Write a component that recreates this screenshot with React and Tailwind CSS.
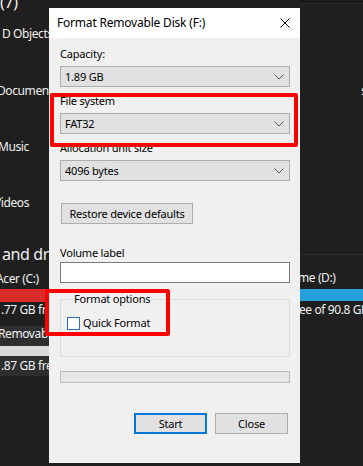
import React from "react";

const font = { fontFamily: '"Noto Sans", "Open Sans", sans-serif' };

function Chevron() {
  return (
    <svg width="10" height="6" viewBox="0 0 10 6" className="mr-[5px]">
      <path d="M0.5 0.5 L5 5 L9.5 0.5" fill="none" stroke="#555" strokeWidth="1" />
    </svg>
  );
}

function Combo({ value }) {
  return (
    <div className="h-[21px] border border-[#adadad] bg-[#e1e1e1] flex items-center justify-between pl-[4px]">
      <span className="text-[11px] leading-[16px] text-black">{value}</span>
      <Chevron />
    </div>
  );
}

function Label({ children, className = "" }) {
  return <div className={"text-[11px] leading-[16px] h-[16px] text-black whitespace-nowrap " + className}>{children}</div>;
}

export default function App() {
  return (
    <div className="relative w-[363px] h-[466px] overflow-hidden bg-[#1f1f1f] text-[#f0f0f0]" style={font}>
      <div className="flex h-full">
        {/* Left explorer column */}
        <div className="w-[49px] shrink-0 overflow-hidden whitespace-nowrap tracking-[-0.4px]">
          <div className="mt-[-8px] h-[20px] text-[16px] leading-[20px]">(7)</div>
          <div className="mt-[14px] h-[16px] text-[12px] leading-[16px] ml-[2px]">D Objects</div>
          <div className="mt-[41px] h-[16px] text-[12px] leading-[16px] ml-[-3px]">Documents</div>
          <div className="mt-[40px] h-[16px] text-[12px] leading-[16px] ml-[-2px]">Music</div>
          <div className="mt-[40px] h-[16px] text-[12px] leading-[16px] ml-[-6px]">Videos</div>
          <div className="mt-[33px] h-[20px] text-[16px] leading-[20px] ml-[2px]">and drives</div>
          <div className="mt-[7px] h-[16px] text-[12px] leading-[16px] ml-[-4px]">Acer (C:)</div>
          <div className="mt-[2px] h-[13px] bg-[#da2a2a]" />
          <div className="h-[16px] text-[12px] leading-[16px] ml-[1px]">.77 GB free</div>
          <div className="mt-[8px] bg-[#2e2e2e] pb-[2px]">
            <div className="h-[16px] text-[12px] leading-[16px] ml-[-2px]">Removable</div>
            <div className="mt-[4px] h-[10px] bg-[#d9d9d9]" />
            <div className="mt-[2px] h-[16px] text-[12px] leading-[16px] ml-[1px]">.87 GB free</div>
          </div>
        </div>

        {/* Dialog column */}
        <div className="w-[251px] shrink-0 pt-[8px] tracking-[-0.2px]">
          <div className="h-[455px] flex flex-col">
            <div className="h-[30px] bg-white flex items-center justify-between pl-[8px] pr-[10px]">
              <span className="text-[12px] leading-[16px] text-black">Format Removable Disk (F:)</span>
              <svg width="10" height="10" viewBox="0 0 10 10">
                <path d="M0.5 0.5 L9.5 9.5 M9.5 0.5 L0.5 9.5" stroke="#000" strokeWidth="1" />
              </svg>
            </div>
            <div className="flex-1 bg-[#f0f0f0] pl-[11px] pr-[10px] pt-[8px] flex flex-col">
              <Label>Capacity:</Label>
              <div className="mt-[4px]"><Combo value="1.89 GB" /></div>
              <Label className="mt-[6px]">File system</Label>
              <div className="mt-[4px]"><Combo value="FAT32" /></div>
              <Label className="mt-[6px]">Allocation unit size</Label>
              <div className="mt-[4px]"><Combo value="4096 bytes" /></div>
              <button className="mt-[22px] ml-[1px] w-[132px] h-[21px] border border-[#adadad] bg-[#e1e1e1] text-[11px] leading-[16px] text-black">
                Restore device defaults
              </button>
              <Label className="mt-[21px]">Volume label</Label>
              <div className="mt-[1px] h-[21px] border border-[#7a7a7a] bg-white" />
              <fieldset className="mt-[8px] h-[66px] border border-[#dcdcdc] pl-[6px]">
                <legend className="ml-[6px] px-[1px] text-[11px] leading-[16px] text-black">Format options</legend>
                <div className="mt-[8px] flex items-center">
                  <div className="w-[13px] h-[13px] border border-[#2d6fbd] bg-white" />
                  <span className="ml-[3px] text-[11px] leading-[16px] text-black">Quick Format</span>
                </div>
              </fieldset>
              <div className="mt-[14px] h-[12px] border border-[#bcbcbc] bg-[#e6e6e6]" />
              <div className="mt-[30px] flex justify-end gap-[8px] pr-[2px]">
                <button className="w-[73px] h-[21px] border-2 border-[#0078d7] bg-[#e1e1e1] text-[11px] leading-[16px] text-black">
                  Start
                </button>
                <button className="w-[73px] h-[21px] border border-[#adadad] bg-[#e1e1e1] text-[11px] leading-[16px] text-black">
                  Close
                </button>
              </div>
            </div>
          </div>
        </div>

        {/* Right explorer column */}
        <div className="flex-1 overflow-hidden whitespace-nowrap tracking-[-0.4px]">
          <div className="h-[4px] bg-[#191919] border-b border-[#2a2a2a]" />
          <div className="mt-[79px] h-[16px] text-[12px] leading-[16px] ml-[61px]">s</div>
          <div className="mt-[155px] h-px bg-[#2f2f2f]" />
          <div className="mt-[15px] h-[16px] text-[12px] leading-[16px] ml-[-2px]">me (D:)</div>
          <div className="mt-[3px] h-[12px] bg-[#26a0da]" />
          <div className="mt-[1px] h-[16px] text-[12px] leading-[16px] ml-[-1px]">ee of 90.8 GB</div>
        </div>
      </div>

      {/* Red highlight boxes */}
      <div className="absolute left-[50px] top-[93px] w-[248px] h-[54px] border-4 border-[#fe0000] rounded-[2px]" />
      <div className="absolute left-[45px] top-[289px] w-[125px] h-[47px] border-4 border-[#fe0000] rounded-[2px]" />
    </div>
  );
}
